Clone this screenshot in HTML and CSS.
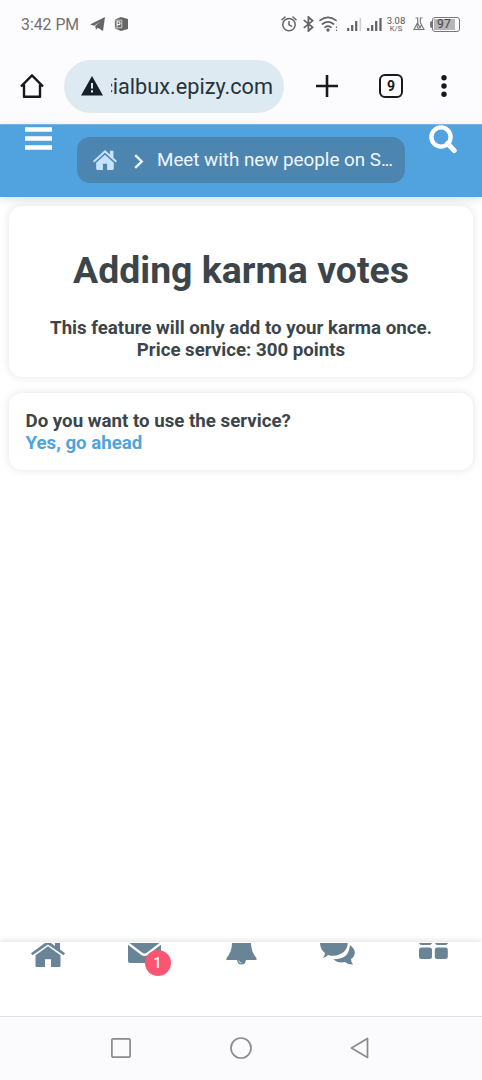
FILE: index.html
```html
<!DOCTYPE html>
<html lang="en">
<head>
<meta charset="utf-8">
<title>Adding karma votes</title>
<link rel="stylesheet" href="styles.css">
</head>
<body>
<div class="phone">
  <div class="status">
    <span class="time">3:42 PM</span>
    <svg class="telegram" width="15" height="14" viewBox="0 0 15 14"><path d="M0 7.500 15 0 13 14 7.800 10.800 6 12.700 5.200 8.900 10.500 4.600 4.200 8.700Z" fill="#666"/></svg>
    <svg class="office" width="14" height="14" viewBox="0 0 14 14"><path d="M1 2.500 7 0l7 2v10l-7 2-6-2.500Z" fill="#666"/><path d="M.6 3.200h7.200v7.600H.6Z" fill="#666" stroke="#fff" stroke-width=".7"/><path d="M3.100 9.600V4.800h1.600a1.400 1.400 0 0 1 0 2.800H3.100" fill="none" stroke="#fff" stroke-width="1.100"/></svg>
    <div class="signals">
      <svg width="16" height="16" viewBox="0 0 16 16" fill="none" stroke="#626262" stroke-width="1.500" stroke-linecap="round"><circle cx="8" cy="8.600" r="6.200"/><path d="M1 3.700 4 1M15 3.700 12 1M8 5.500v3.400l2.600 1.300"/></svg>
      <svg class="bluetooth" width="11" height="16" viewBox="0 0 11 16" fill="none" stroke="#626262" stroke-width="1.700"><path d="M.8 4.200 9.600 11.200 5.400 15V1l4.200 3.800L.8 11.800"/></svg>
      <svg class="wifi" width="20" height="16" viewBox="0 0 20 16" fill="none" stroke="#626262" stroke-width="1.700" stroke-linecap="round"><path d="M1 4.400q8-6 16 0M3.500 8q5.500-4.300 11 0M6 11.300q3-2.400 6 0"/><circle cx="9" cy="14" r=".8" fill="#626262"/><path d="M17.500 11.200h.1M17.500 14.300h.1" stroke-width="1.400"/></svg>
      <svg class="bars" width="15" height="15" viewBox="0 0 15 15" fill="none" stroke="#626262" stroke-width="2.200"><path d="M1.200 14v-3M5.200 14V8M9.200 14V4"/><path d="M13.300 14V1" stroke="#ccc" stroke-width="1.600"/></svg>
      <svg class="bars2" width="15" height="15" viewBox="0 0 15 15" fill="none" stroke="#626262" stroke-width="2.200"><path d="M1.200 14v-3M5.200 14V8M9.200 14V4M13.500 14V1"/></svg>
      <span class="speed"><span>3.08</span><span class="unit">K/S</span></span>
      <svg class="flask" width="12" height="14" viewBox="0 0 12 14" fill="none" stroke="#777" stroke-width="1.100"><path d="M2.500 1h2.200v4.500L1 12.500h4.500L4 8.500M9.500 1H7.300v4.500l3.700 7H6.500L8 8.500M4.700 6l3 6.500"/></svg>
      <span class="nub"></span><span class="battery"><span class="charge">97</span></span>
    </div>
  </div>

  <div class="browser">
    <svg class="home" width="24" height="26" viewBox="0 0 24 26" fill="none" stroke="#171a1d" stroke-width="2.400" stroke-linejoin="round"><path d="M1 13.500 12 2.300l11 11.200M4 11.500v12.300h16V11.500"/></svg>
    <div class="address">
      <svg width="22" height="20" viewBox="0 0 22 20"><path d="M11 0 22 19.500H0Z" fill="#17202a"/><path d="M11 7v5.500M11 14.200v2.200" stroke="#deeaf2" stroke-width="2"/></svg>
      <span class="urlbox"><span class="url">cialbux.epizy.com</span></span>
    </div>
    <svg class="plus" width="22" height="22" viewBox="0 0 22 22"><path d="M0 11h22M11 0v22" stroke="#171a1d" stroke-width="2.600"/></svg>
    <span class="tabs">9</span>
    <svg class="more" width="6" height="22" viewBox="0 0 6 22" fill="#171a1d"><circle cx="3" cy="2.800" r="2.700"/><circle cx="3" cy="11" r="2.700"/><circle cx="3" cy="19.200" r="2.700"/></svg>
  </div>

  <header class="header">
    <svg class="menu" width="27" height="24" viewBox="0 0 27 24"><path d="M0 2.500h27M0 11.500h27M0 20.500h27" stroke="#fff" stroke-width="4.600"/></svg>
    <nav class="crumbs">
      <svg width="24" height="20" viewBox="0 0 34 26" preserveAspectRatio="none" fill="#c5e2ff"><path d="M17 0 0 14.200l1.800 2L17 3.500l15.200 12.700 1.800-2-5-4.200V1h-5v4.800Z"/><path d="M17 6.200 4.500 16.500V24.500q0 1.500 1.500 1.500h8v-8h6v8h8q1.500 0 1.500-1.500v-8Z"/></svg>
      <svg class="chevron" width="10" height="15" viewBox="0 0 10 15" fill="none" stroke="#edf7ff" stroke-width="2.400"><path d="m1.200 1.200 6.500 6.300-6.500 6.300"/></svg>
      <span class="crumb">Meet with new people on S<span class="dots">...</span></span>
    </nav>
    <svg class="search" width="28" height="29" viewBox="0 0 28 29" fill="none" stroke="#fff"><circle cx="12" cy="12" r="9.600" stroke-width="4.400"/><path d="m18.500 18.500 6.700 7" stroke-width="5" stroke-linecap="round"/></svg>
  </header>

  <main class="content">
    <section class="card intro">
      <h1>Adding karma votes</h1>
      <p class="feature">This feature will only add to your karma once.</p>
      <p class="price">Price service: 300 points</p>
    </section>
    <section class="card confirm">
      <p class="question">Do you want to use the service?</p>
      <a class="go">Yes, go ahead</a>
    </section>
  </main>

  <nav class="dock">
    <svg class="d-home" width="34" height="24" viewBox="0 0 34 25" preserveAspectRatio="none" fill="#6a8497"><path d="M14 0h6l4 3.100V0h5v6.800l5 4-1.500 2L17 1.600 1.500 12.800 0 10.800Z"/><path d="M17 3.300 4.500 12.700V24q0 1 1 1H14v-8h6v8h8.500q1 0 1-1V12.700Z"/></svg>
    <div class="mail">
      <svg width="33" height="20" viewBox="0 0 33 20" fill="#6a8497"><path d="M1.500 0h30L19 9.400q-2.500 2-5 0Z"/><path d="M0 1.700 13 11.700q3.500 2.600 7 0l13-10V18q0 2-2 2H2q-2 0-2-2Z"/></svg>
      <span class="badge">1</span>
    </div>
    <svg class="bell" width="31" height="22" viewBox="0 0 31 22"><path d="M6 0h19q0 9 5.500 15v2H.5v-2Q6 9 6 0ZM11 16h9q0 5.500-4.500 5.500T11 16" fill="#6a8497"/><path d="M12.800 17.500q.2 2.300 2.700 2.500" stroke="#ddd" fill="none"/></svg>
    <svg class="chat" width="35" height="22" viewBox="0 1 35 22" fill="#6a8497"><path d="M0 0h27.500q1 5-3.500 9.700-7.500 6-16 3.200-2 2.700-5.500 2.800 2.500-2.200 2.500-4.500Q-.2 7.200 0 0Z"/><path d="M29.800 3q5 3.500 5 7.500 0 4-3.800 6.600 0 3 2 5.400-5 .2-8-2.500-7 1.500-12-2.800Q29.500 17.500 29.800 3Z"/></svg>
    <svg class="grid" width="29" height="17" viewBox="0 0 29 17" fill="#6a8497"><path d="M0 0h13q-.5 2-2.500 2h-8Q.5 2 0 0M16 0h13q-.5 2-2.500 2h-8q-2 0-2.500-2"/><rect y="4.500" width="13" height="11.500" rx="2.500"/><rect x="15.800" y="4.500" width="13" height="11.500" rx="2.500"/></svg>
  </nav>

  <div class="system">
    <svg class="recent" width="20" height="20" viewBox="0 0 20 20"><rect x=".9" y=".9" width="18.200" height="18.200" rx="1" fill="none" stroke="#8b8b8b" stroke-width="1.700"/></svg>
    <svg class="circle" width="22" height="22" viewBox="0 0 22 22"><circle cx="11" cy="11" r="10" fill="none" stroke="#8b8b8b" stroke-width="1.700"/></svg>
    <svg class="back" width="19" height="22" viewBox="0 0 19 22"><path d="M17.500 1.500v19L1.500 11Z" fill="none" stroke="#8b8b8b" stroke-width="1.700" stroke-linejoin="round"/></svg>
  </div>
</div>
</body>
</html>
```
FILE: styles.css
```css
* { box-sizing: border-box; }
body { margin: 0; background: #fff; font-family: Roboto, sans-serif; color: #3c4549; }
svg { display: block; flex: none; }
p, h1 { margin: 0; white-space: nowrap; }
.phone { width: 482px; height: 1080px; display: flex; flex-direction: column; overflow: hidden; }

.status { height: 48px; flex: none; display: flex; align-items: center; padding: 0 22px 0 21px; background: #fcfcff; }
.time { width: 58px; font-size: 15.800px; color: #707070; white-space: nowrap; padding-top: 1px; }
.telegram { margin-left: 11px; }
.office { margin-left: 9px; }
.signals { margin-left: auto; display: flex; align-items: center; }
.bluetooth { margin-left: 6px; }
.wifi { margin-left: 5px; }
.bars { margin-left: 8px; }
.bars2 { margin-left: 5px; }
.speed { width: 18px; margin-left: 5px; display: flex; flex-direction: column; align-items: center; font-size: 9.500px; line-height: 9px; color: #555; }
.unit { font-size: 7.500px; line-height: 8px; }
.flask { margin-left: 8px; }
.nub { width: 2px; height: 7px; margin-left: 5px; background: #777; border-radius: 2px 0 0 2px; }
.battery { width: 28px; height: 15px; padding: 1px; border: 1.500px solid #777; border-radius: 3px; }
.charge { display: block; width: 21px; height: 11px; padding-left: 3px; background: #b5b5b5; font-size: 12px; line-height: 11px; letter-spacing: .3px; color: #444; }

.browser { height: 76px; flex: none; display: flex; align-items: center; padding: 0 35px 0 20px; background: #fcfcff; }
.address { width: 220px; height: 53px; margin-left: 20px; padding-left: 17px; border-radius: 27px; background: #deeaf2; display: flex; align-items: center; }
.urlbox { width: 162px; margin-left: 8px; padding-top: 1px; display: flex; justify-content: flex-end; overflow: hidden; }
.url { font-size: 21.700px; line-height: 30px; color: #26323c; white-space: nowrap; }
.plus { margin-left: 31.500px; }
.tabs { width: 24px; height: 24px; margin-left: 41.500px; border: 2.500px solid #171a1d; border-radius: 6px; font-size: 14px; line-height: 20px; font-weight: 700; text-align: center; color: #171a1d; }
.more { margin-left: 38px; }

.header { position: relative; z-index: 1; height: 73px; flex: none; display: flex; align-items: flex-start; padding: 0 24px 0 25px; background: #51a3df; box-shadow: 0 2px 8px rgba(0,0,0,.13); border-top: 1px solid #74b5e5; }
.menu { margin-top: 2px; }
.crumbs { width: 328px; height: 46px; margin: 12px 0 0 25px; padding-left: 16px; border-radius: 13px; background: #4c86b0; display: flex; align-items: center; }
.chevron { margin-left: 17px; margin-top: 3px; }
.crumb { margin-left: 13px; font-size: 18.800px; color: #f2f8ff; white-space: nowrap; }
.dots { letter-spacing: -1.300px; }
.search { margin-left: 24px; }

.content { flex: 1; padding: 9px 9px 0; background: #fff; }
.card { background: #fff; border-radius: 13px; box-shadow: 0 0 10px rgba(0,0,0,.11); }
.intro { height: 171px; padding-top: 41px; text-align: center; }
h1 { font-size: 37.400px; line-height: 46px; font-weight: 700; }
.feature, .price, .question, .go { display: block; font-size: 18.700px; line-height: 22px; font-weight: 700; }
.feature { margin-top: 24px; }
.confirm { height: 77px; margin-top: 16px; padding: 17px 16.500px; }
.go { color: #51a3db; }

.dock { position: relative; height: 74px; flex: none; display: flex; align-items: flex-start; padding: 1px 0 0 31px; background: #fff; box-shadow: 0 -1px 6px rgba(0,0,0,.13); }
.mail { position: relative; width: 33px; margin-left: 63px; }
.badge { position: absolute; left: 16.500px; top: 7px; width: 26px; height: 26px; border-radius: 50%; background: #fc5571; color: #fff; font-size: 14px; line-height: 26px; font-weight: 500; text-align: center; }
.bell { margin-left: 65px; }
.chat { margin-left: 63px; }
.grid { margin-left: 64px; }

.system { position: relative; height: 64px; flex: none; display: flex; align-items: center; padding: 0 0 2px 110.500px; background: #fbfbfe; border-top: 1px solid #dcdfe5; }
.circle { margin-left: 99.500px; }
.back { margin-left: 98px; }
```
